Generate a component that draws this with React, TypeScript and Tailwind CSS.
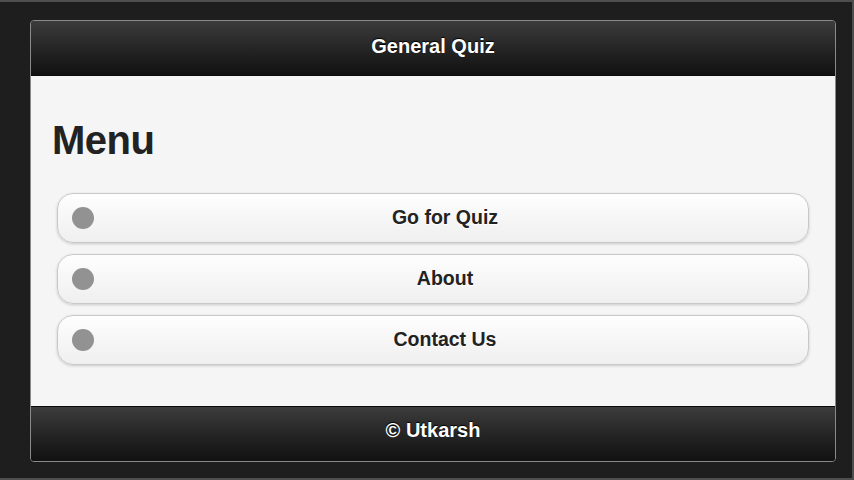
import React from 'react';

const items = ['Go for Quiz', 'About', 'Contact Us'];

function MenuButton({ label }: { label: string }) {
  return (
    <button className="flex h-[50px] w-full items-center rounded-[16px] border border-[#c8c8c8] bg-gradient-to-b from-[#fefefe] to-[#efefef] pr-[12px] shadow-[0_1px_3px_rgba(0,0,0,0.18)]">
      <span className="ml-[14px] h-[22px] w-[22px] shrink-0 rounded-full bg-[#929292]" />
      <span className="flex-1 text-center text-[19.5px] font-bold text-[#222] [text-shadow:0_1px_0_#fff]">
        {label}
      </span>
    </button>
  );
}

export default function App() {
  return (
    <div
      className="h-[480px] w-[854px] border-t-2 border-r-2 border-b-2 border-[#4e4e4e] bg-[#1e1e1e] pl-[30px] pt-[18px]"
      style={{ fontFamily: '"Liberation Sans", Arial, sans-serif' }}
    >
      <div className="flex w-[806px] flex-col overflow-hidden rounded-[4px] border border-[#8a8a8a]">
        {/* header */}
        <div className="flex h-[55px] items-center justify-center border-b border-[#0a0a0a] bg-gradient-to-b from-[#3c3c3c] to-[#111] pb-[4px]">
          <h1 className="text-[20px] font-bold text-white [text-shadow:0_-1px_1px_#000]">General Quiz</h1>
        </div>

        {/* content */}
        <div className="flex h-[330px] flex-col bg-[#f5f5f5] pt-[44px]">
          <h2 className="ml-[21px] text-[40px] leading-[40px] font-bold tracking-[-0.5px] text-[#222]">Menu</h2>
          <div className="mx-[26px] mt-[33px] flex flex-col gap-[11px]">
            {items.map((it) => (
              <MenuButton key={it} label={it} />
            ))}
          </div>
        </div>

        {/* footer */}
        <div className="flex h-[55px] items-center justify-center border-t border-[#0a0a0a] bg-gradient-to-b from-[#3c3c3c] to-[#111] pb-[8px]">
          <span className="text-[20px] font-bold text-white [text-shadow:0_-1px_1px_#000]">© Utkarsh</span>
        </div>
      </div>
    </div>
  );
}
